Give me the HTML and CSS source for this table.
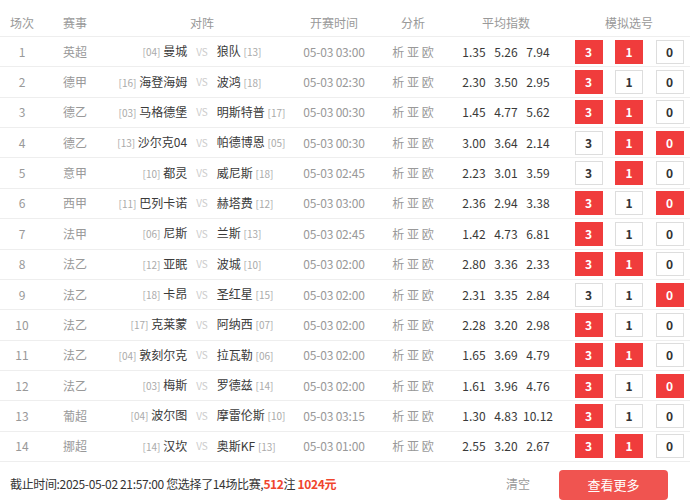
FILE: index.html
```html
<!DOCTYPE html>
<html lang="zh-CN">
<head>
<meta charset="utf-8">
<title>模拟选号</title>
<link rel="stylesheet" href="styles.css">
</head>
<body>
<div class="page">
  <div class="row head">
    <div class="c">场次</div>
    <div class="c">赛事</div>
    <div class="c">对阵</div>
    <div class="c">开赛时间</div>
    <div class="c">分析</div>
    <div class="c">平均指数</div>
    <div class="c pick-head">模拟选号</div>
  </div>

  <div class="row"><div class="c num">1</div><div class="c lg">英超</div>
    <div class="c match"><span class="home"><i>[04]</i> 曼城</span><span class="vs">VS</span><span class="away">狼队 <i>[13]</i></span></div>
    <div class="c time">05-03 03:00</div><div class="c ana">析 亚 欧</div>
    <div class="c odds"><span>1.35</span><span>5.26</span><span>7.94</span></div>
    <div class="c pick"><b class="on">3</b><b class="on">1</b><b>0</b></div></div>

  <div class="row"><div class="c num">2</div><div class="c lg">德甲</div>
    <div class="c match"><span class="home"><i>[16]</i> 海登海姆</span><span class="vs">VS</span><span class="away">波鸿 <i>[18]</i></span></div>
    <div class="c time">05-03 02:30</div><div class="c ana">析 亚 欧</div>
    <div class="c odds"><span>2.30</span><span>3.50</span><span>2.95</span></div>
    <div class="c pick"><b class="on">3</b><b>1</b><b>0</b></div></div>

  <div class="row"><div class="c num">3</div><div class="c lg">德乙</div>
    <div class="c match"><span class="home"><i>[03]</i> 马格德堡</span><span class="vs">VS</span><span class="away">明斯特普 <i>[17]</i></span></div>
    <div class="c time">05-03 00:30</div><div class="c ana">析 亚 欧</div>
    <div class="c odds"><span>1.45</span><span>4.77</span><span>5.62</span></div>
    <div class="c pick"><b class="on">3</b><b class="on">1</b><b>0</b></div></div>

  <div class="row"><div class="c num">4</div><div class="c lg">德乙</div>
    <div class="c match"><span class="home"><i>[13]</i> 沙尔克04</span><span class="vs">VS</span><span class="away">帕德博恩 <i>[05]</i></span></div>
    <div class="c time">05-03 00:30</div><div class="c ana">析 亚 欧</div>
    <div class="c odds"><span>3.00</span><span>3.64</span><span>2.14</span></div>
    <div class="c pick"><b>3</b><b class="on">1</b><b class="on">0</b></div></div>

  <div class="row"><div class="c num">5</div><div class="c lg">意甲</div>
    <div class="c match"><span class="home"><i>[10]</i> 都灵</span><span class="vs">VS</span><span class="away">威尼斯 <i>[18]</i></span></div>
    <div class="c time">05-03 02:45</div><div class="c ana">析 亚 欧</div>
    <div class="c odds"><span>2.23</span><span>3.01</span><span>3.59</span></div>
    <div class="c pick"><b>3</b><b class="on">1</b><b>0</b></div></div>

  <div class="row"><div class="c num">6</div><div class="c lg">西甲</div>
    <div class="c match"><span class="home"><i>[11]</i> 巴列卡诺</span><span class="vs">VS</span><span class="away">赫塔费 <i>[12]</i></span></div>
    <div class="c time">05-03 03:00</div><div class="c ana">析 亚 欧</div>
    <div class="c odds"><span>2.36</span><span>2.94</span><span>3.38</span></div>
    <div class="c pick"><b class="on">3</b><b>1</b><b class="on">0</b></div></div>

  <div class="row"><div class="c num">7</div><div class="c lg">法甲</div>
    <div class="c match"><span class="home"><i>[06]</i> 尼斯</span><span class="vs">VS</span><span class="away">兰斯 <i>[13]</i></span></div>
    <div class="c time">05-03 02:45</div><div class="c ana">析 亚 欧</div>
    <div class="c odds"><span>1.42</span><span>4.73</span><span>6.81</span></div>
    <div class="c pick"><b class="on">3</b><b>1</b><b>0</b></div></div>

  <div class="row"><div class="c num">8</div><div class="c lg">法乙</div>
    <div class="c match"><span class="home"><i>[12]</i> 亚眠</span><span class="vs">VS</span><span class="away">波城 <i>[10]</i></span></div>
    <div class="c time">05-03 02:00</div><div class="c ana">析 亚 欧</div>
    <div class="c odds"><span>2.80</span><span>3.36</span><span>2.33</span></div>
    <div class="c pick"><b class="on">3</b><b class="on">1</b><b>0</b></div></div>

  <div class="row"><div class="c num">9</div><div class="c lg">法乙</div>
    <div class="c match"><span class="home"><i>[18]</i> 卡昂</span><span class="vs">VS</span><span class="away">圣红星 <i>[15]</i></span></div>
    <div class="c time">05-03 02:00</div><div class="c ana">析 亚 欧</div>
    <div class="c odds"><span>2.31</span><span>3.35</span><span>2.84</span></div>
    <div class="c pick"><b>3</b><b>1</b><b class="on">0</b></div></div>

  <div class="row"><div class="c num">10</div><div class="c lg">法乙</div>
    <div class="c match"><span class="home"><i>[17]</i> 克莱蒙</span><span class="vs">VS</span><span class="away">阿纳西 <i>[07]</i></span></div>
    <div class="c time">05-03 02:00</div><div class="c ana">析 亚 欧</div>
    <div class="c odds"><span>2.28</span><span>3.20</span><span>2.98</span></div>
    <div class="c pick"><b class="on">3</b><b>1</b><b>0</b></div></div>

  <div class="row"><div class="c num">11</div><div class="c lg">法乙</div>
    <div class="c match"><span class="home"><i>[04]</i> 敦刻尔克</span><span class="vs">VS</span><span class="away">拉瓦勒 <i>[06]</i></span></div>
    <div class="c time">05-03 02:00</div><div class="c ana">析 亚 欧</div>
    <div class="c odds"><span>1.65</span><span>3.69</span><span>4.79</span></div>
    <div class="c pick"><b class="on">3</b><b class="on">1</b><b>0</b></div></div>

  <div class="row"><div class="c num">12</div><div class="c lg">法乙</div>
    <div class="c match"><span class="home"><i>[03]</i> 梅斯</span><span class="vs">VS</span><span class="away">罗德兹 <i>[14]</i></span></div>
    <div class="c time">05-03 02:00</div><div class="c ana">析 亚 欧</div>
    <div class="c odds"><span>1.61</span><span>3.96</span><span>4.76</span></div>
    <div class="c pick"><b class="on">3</b><b>1</b><b class="on">0</b></div></div>

  <div class="row"><div class="c num">13</div><div class="c lg">葡超</div>
    <div class="c match"><span class="home"><i>[04]</i> 波尔图</span><span class="vs">VS</span><span class="away">摩雷伦斯 <i>[10]</i></span></div>
    <div class="c time">05-03 03:15</div><div class="c ana">析 亚 欧</div>
    <div class="c odds"><span>1.30</span><span>4.83</span><span>10.12</span></div>
    <div class="c pick"><b class="on">3</b><b>1</b><b>0</b></div></div>

  <div class="row"><div class="c num">14</div><div class="c lg">挪超</div>
    <div class="c match"><span class="home"><i>[14]</i> 汉坎</span><span class="vs">VS</span><span class="away">奥斯KF <i>[13]</i></span></div>
    <div class="c time">05-03 01:00</div><div class="c ana">析 亚 欧</div>
    <div class="c odds"><span>2.55</span><span>3.20</span><span>2.67</span></div>
    <div class="c pick"><b class="on">3</b><b class="on">1</b><b>0</b></div></div>

  <div class="footer">
    <div class="summary">截止时间:2025-05-02 21:57:00 您选择了14场比赛,<em>512</em>注 <em>1024元</em></div>
    <div class="actions">
      <span class="clear">清空</span>
      <span class="more">查看更多</span>
    </div>
  </div>
</div>
</body>
</html>
```
FILE: styles.css
```css
html, body {
  margin: 0;
  padding: 0;
  background: #fff;
}
.page {
  width: 690px;
  font-family: "Noto Sans CJK SC", sans-serif;
  font-size: 12px;
  color: #333;
}
.row {
  display: grid;
  grid-template-columns: 44px 62px 192px 72px 86px 100px 134px;
  align-items: center;
  height: 30.36px;
  box-sizing: border-box;
  border-bottom: 1px solid #eeeeee;
}
.row.head {
  height: 37px;
  padding-top: 9px;
  color: #999;
}
.c {
  text-align: center;
  white-space: nowrap;
  line-height: 16px;
}
.num, .lg, .time, .ana {
  color: #999;
}
.time {
  letter-spacing: -0.2px;
}
.match {
  display: grid;
  grid-template-columns: 1fr auto 1fr;
  column-gap: 9px;
  align-items: center;
  color: #3a3a3a;
}
.home {
  text-align: right;
}
.away {
  text-align: left;
}
.match i {
  font-style: normal;
  font-size: 10px;
  color: #aaa;
}
.vs {
  font-size: 10px;
  color: #ccc;
}
.odds {
  display: flex;
  justify-content: center;
  color: #3a3a3a;
}
.odds span {
  width: 32px;
  text-align: center;
}
.pick-head {
  padding-left: 12px;
}
.pick {
  display: flex;
  gap: 12.5px;
  padding-left: 18.5px;
}
.pick b {
  width: 28px;
  height: 24px;
  box-sizing: border-box;
  border: 1px solid #dddddd;
  background: #fff;
  color: #333;
  font-weight: bold;
  font-size: 12px;
  line-height: 22px;
  text-align: center;
}
.pick b.on {
  background: #f03c3c;
  border-color: #f03c3c;
  color: #fff;
}
.footer {
  display: flex;
  align-items: center;
  justify-content: space-between;
  height: 43px;
  padding-left: 10px;
  padding-right: 22px;
  box-sizing: border-box;
}
.summary {
  color: #333;
  white-space: nowrap;
  letter-spacing: -0.35px;
}
.summary em {
  font-style: normal;
  font-weight: bold;
  color: #f0452d;
}
.actions {
  display: flex;
  align-items: center;
  gap: 29px;
}
.clear {
  color: #999;
  font-size: 12px;
}
.more {
  width: 109px;
  height: 30px;
  border-radius: 4px;
  background: #f05450;
  color: #fff;
  font-size: 13px;
  line-height: 30px;
  text-align: center;
  margin-top: 3px;
}
```
